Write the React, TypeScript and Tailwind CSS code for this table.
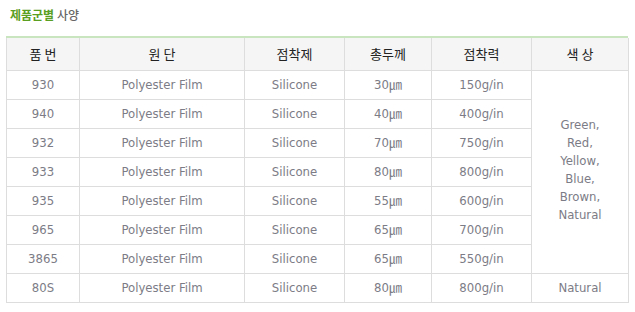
const rows = [
  ["930", "30㎛", "150g/in"],
  ["940", "40㎛", "400g/in"],
  ["932", "70㎛", "750g/in"],
  ["933", "80㎛", "800g/in"],
  ["935", "55㎛", "600g/in"],
  ["965", "65㎛", "700g/in"],
  ["3865", "65㎛", "550g/in"],
]

const cell = "border border-[#dddddd] h-[29px] p-0 text-center align-middle"

export default function App() {
  return (
    <div
      className="w-[635px] h-[312px] bg-white text-[13px]"
      style={{ fontFamily: '"DejaVu Sans Condensed", "DejaVu Sans", "Noto Sans CJK KR", sans-serif' }}
    >
      <div className="pt-[7px] pl-[10px] h-[36px] text-[12px] font-bold leading-[16px] font-['Noto_Sans_CJK_KR',sans-serif]">
        <span className="text-[#5a9e22]">제품군별</span>{" "}
        <span className="text-[#666666] font-medium">사양</span>
      </div>
      <div className="ml-[6px] w-[622px] border-t-2 border-[#c9e5bf]">
        <table className="w-full border-collapse table-fixed text-[#7c7c86]">
          <colgroup>
            <col className="w-[73px]" />
            <col className="w-[165px]" />
            <col className="w-[100px]" />
            <col className="w-[87px]" />
            <col className="w-[100px]" />
            <col className="w-[97px]" />
          </colgroup>
          <thead>
            <tr className="bg-[#f5f5f5] text-[#222222] text-[13px] font-['Noto_Sans_CJK_KR',sans-serif]">
              <th className={`${cell} border-t-0 h-[32px] font-normal`}>품 번</th>
              <th className={`${cell} border-t-0 h-[32px] font-normal`}>원 단</th>
              <th className={`${cell} border-t-0 h-[32px] font-normal`}>점착제</th>
              <th className={`${cell} border-t-0 h-[32px] font-normal`}>총두께</th>
              <th className={`${cell} border-t-0 h-[32px] font-normal`}>점착력</th>
              <th className={`${cell} border-t-0 h-[32px] font-normal`}>색 상</th>
            </tr>
          </thead>
          <tbody>
            {rows.map((r, i) => (
              <tr key={r[0]}>
                <td className={cell}>{r[0]}</td>
                <td className={cell}>Polyester Film</td>
                <td className={cell}>Silicone</td>
                <td className={cell}>{r[1]}</td>
                <td className={cell}>{r[2]}</td>
                {i === 0 && (
                  <td rowSpan={7} className={`${cell} leading-[18px] pb-[4px]`}>
                    Green,<br />Red,<br />Yellow,<br />Blue,<br />Brown,<br />Natural
                  </td>
                )}
              </tr>
            ))}
            <tr>
              <td className={cell}>80S</td>
              <td className={cell}>Polyester Film</td>
              <td className={cell}>Silicone</td>
              <td className={cell}>80㎛</td>
              <td className={cell}>800g/in</td>
              <td className={cell}>Natural</td>
            </tr>
          </tbody>
        </table>
      </div>
    </div>
  )
}
